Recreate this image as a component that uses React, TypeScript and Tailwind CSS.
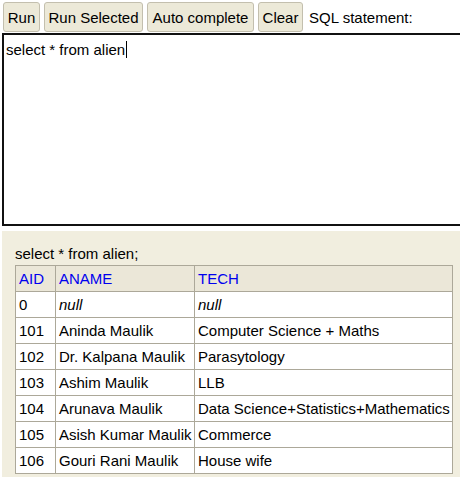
import React from "react";

const rows = [
  { aid: "0", aname: "null", tech: "null", nil: true },
  { aid: "101", aname: "Aninda Maulik", tech: "Computer Science + Maths" },
  { aid: "102", aname: "Dr. Kalpana Maulik", tech: "Parasytology" },
  { aid: "103", aname: "Ashim Maulik", tech: "LLB" },
  { aid: "104", aname: "Arunava Maulik", tech: "Data Science+Statistics+Mathematics" },
  { aid: "105", aname: "Asish Kumar Maulik", tech: "Commerce" },
  { aid: "106", aname: "Gouri Rani Maulik", tech: "House wife" },
];

function Btn({ label, w }: { label: string; w: string }) {
  return (
    <button
      className={`${w} h-[30px] shrink-0 rounded-[3px] border border-[#c3bfae] bg-[#ece9d8] text-center text-[15px] leading-[17px] text-black`}
    >
      {label}
    </button>
  );
}

export default function App() {
  return (
    <div
      className="h-[477px] w-[460px] overflow-hidden bg-white text-[15px] leading-[17px] text-black"
      style={{ fontFamily: '"Liberation Sans", Arial, sans-serif' }}
    >
      <div className="flex items-center pl-[3px] pt-[2px]">
        <div className="flex gap-[4px]">
          <Btn label="Run" w="w-[37px]" />
          <Btn label="Run Selected" w="w-[99px]" />
          <Btn label="Auto complete" w="w-[107px]" />
          <Btn label="Clear" w="w-[45px]" />
        </div>
        <span className="ml-[6px] whitespace-nowrap">SQL statement:</span>
      </div>

      <div className="ml-[2px] mt-[1px] h-[193px] w-[480px] border-2 border-[#111] px-[2px] pt-[3px]">
        <span>select * from alien</span>
        <span className="ml-px inline-block h-[17px] w-px translate-y-[3px] bg-black" />
      </div>

      <div className="ml-[2px] mt-[5px] h-[260px] w-[480px] bg-[#f1eedf] pl-[13px] pt-[14px]">
        <div className="mb-[3px]">select * from alien;</div>
        <table className="border-collapse border border-[#aca899] bg-white">
          <thead>
            <tr className="bg-[#ebe7d8] text-[#0000ee]">
              <th className="h-[26px] w-[40px] border border-[#aca899] pl-[3px] text-left font-normal">AID</th>
              <th className="h-[26px] w-[139px] border border-[#aca899] pl-[3px] text-left font-normal">ANAME</th>
              <th className="h-[26px] w-[258px] border border-[#aca899] pl-[3px] text-left font-normal">TECH</th>
            </tr>
          </thead>
          <tbody>
            {rows.map((r) => (
              <tr key={r.aid}>
                <td className="h-[26px] border border-[#aca899] pl-[3px]">{r.aid}</td>
                <td className={`h-[26px] whitespace-nowrap border border-[#aca899] pl-[3px] ${r.nil ? "italic" : ""}`}>{r.aname}</td>
                <td className={`h-[26px] whitespace-nowrap border border-[#aca899] pl-[3px] ${r.nil ? "italic" : ""}`}>{r.tech}</td>
              </tr>
            ))}
          </tbody>
        </table>
      </div>
    </div>
  );
}
